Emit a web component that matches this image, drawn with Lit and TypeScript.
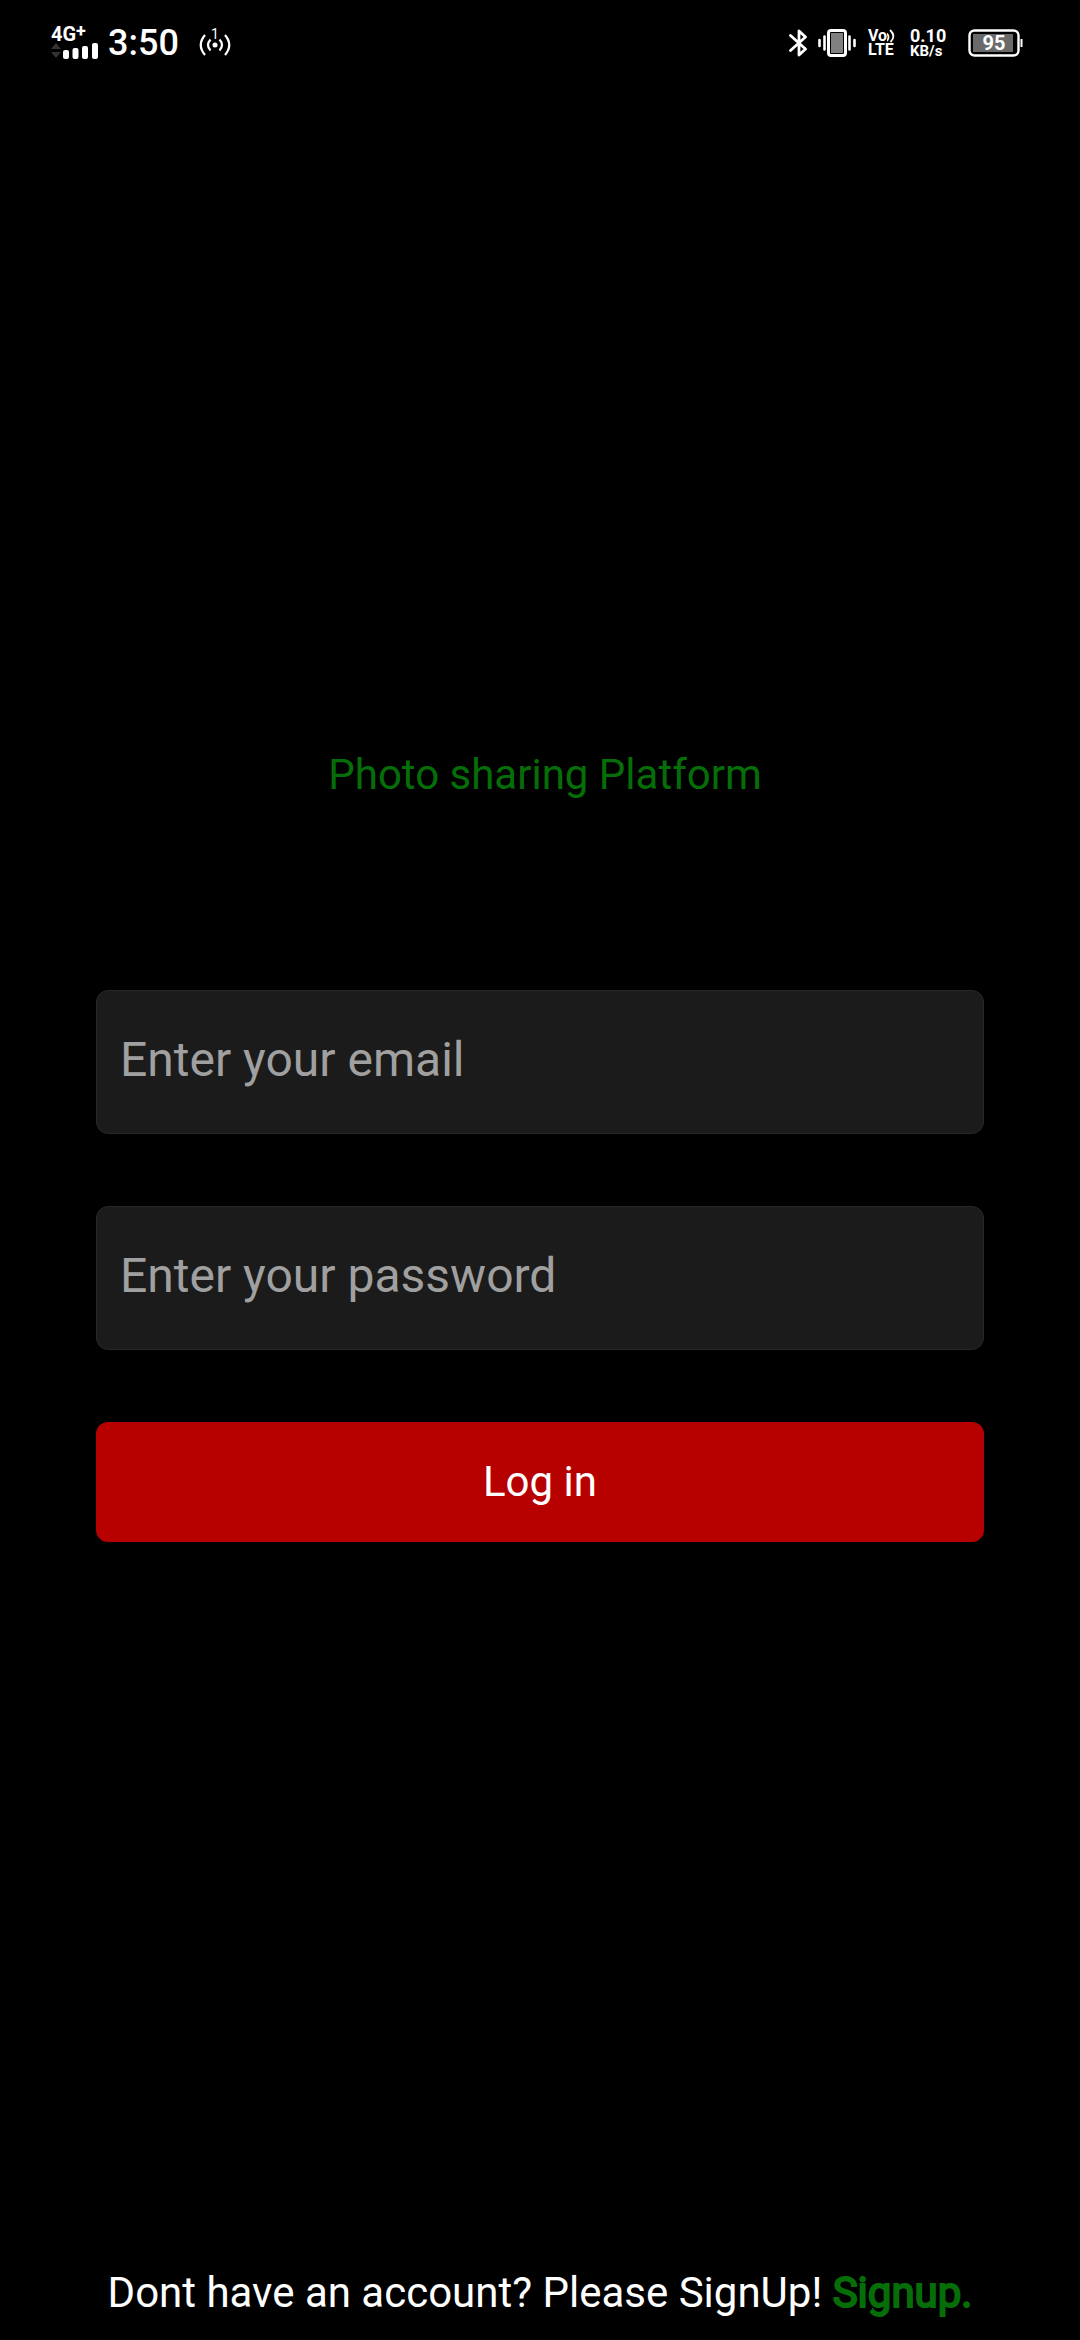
import { LitElement, html, css } from "lit";
import { customElement } from "lit/decorators.js";

@customElement("status-bar")
class StatusBar extends LitElement {
  static styles = css`
    :host {
      display: flex;
      justify-content: space-between;
      align-items: center;
      height: 86px;
      padding: 0 57px 0 51px;
      color: #fff;
      font-family: Roboto, sans-serif;
    }
    .group {
      display: flex;
      align-items: center;
    }
    .signal {
      display: flex;
      flex-direction: column;
      width: 48px;
    }
    .network {
      font-size: 20px;
      line-height: 15px;
      font-weight: 700;
      white-space: nowrap;
    }
    .plus {
      font-size: 18px;
      line-height: 8px;
      vertical-align: 4px;
    }
    .clock {
      margin-left: 9px;
      font-size: 36px;
      line-height: 42px;
      font-weight: 500;
    }
    .hotspot {
      margin-left: 20px;
    }
    .vibrate {
      margin-left: 10px;
    }
    .stack {
      display: flex;
      flex-direction: column;
      font-weight: 700;
    }
    .volte {
      margin-left: 12px;
      width: 28px;
      font-size: 16px;
      line-height: 14px;
    }
    .voice {
      display: flex;
    }
    .speed {
      margin-left: 14px;
      width: 38px;
      font-size: 18px;
      line-height: 16px;
    }
    .unit {
      font-size: 15px;
      line-height: 14px;
    }
    .battery {
      margin-left: 20px;
    }
    svg {
      display: block;
      flex: none;
    }
    text {
      font-family: Roboto, sans-serif;
      fill: #fff;
    }
  `;

  render() {
    return html`
      <div class="group">
        <div class="signal">
          <span class="network">4G<span class="plus">+</span></span>
          <svg width="48" height="17" viewBox="0 0 48 17" aria-hidden="true">
            <path d="M0 7L5 1L10 7ZM0 10H10L5 16Z" fill="#333" />
            <g fill="#fff">
              <rect x="12" y="8" width="6" height="9" rx="2" />
              <rect x="21.500" y="6" width="6" height="11" rx="2" />
              <rect x="31" y="4" width="6" height="13" rx="2" />
              <rect x="41" y="1" width="6" height="16" rx="2" />
            </g>
          </svg>
        </div>
        <span class="clock">3:50</span>
        <svg class="hotspot" width="32" height="36" viewBox="0 -3 32 36" aria-label="Hotspot">
          <circle cx="16" cy="17" r="2.500" fill="#fff" />
          <g fill="none" stroke="#fff" stroke-width="2.200">
            <path d="M11.500 11.500Q6.500 17 11.500 22.500M20.500 11.500Q25.500 17 20.500 22.500" />
            <path d="M6 7Q-2.500 17 6 27M26 7Q34.500 17 26 27" />
          </g>
          <text x="12" y="11" font-size="14">1</text>
        </svg>
      </div>
      <div class="group">
        <svg width="19" height="30" viewBox="0 0 19 30" aria-label="Bluetooth">
          <path
            d="M1.500 7.500L16.500 21L10 27V3L16.500 9L1.500 22.500"
            fill="none"
            stroke="#fff"
            stroke-width="2.800"
            stroke-linejoin="round"
            stroke-linecap="round"
          />
        </svg>
        <svg class="vibrate" width="38" height="30" viewBox="0 0 38 30" aria-label="Vibrate">
          <rect x="10.500" y="2.500" width="17" height="25" rx="2.500" fill="#000" stroke="#fff" stroke-width="3" />
          <rect x="13" y="5" width="12" height="20" fill="#808080" />
          <path
            d="M1.500 12V18M6.500 8.500V21.500M31.500 8.500V21.500M36.500 12V18"
            stroke="#fff"
            stroke-width="2.600"
            stroke-linecap="round"
          />
        </svg>
        <div class="stack volte">
          <span class="voice">
            Vo
            <svg width="8" height="14" viewBox="0 0 8 14" aria-hidden="true">
              <path d="M0 4.500Q3 8 0 12M3 1Q9.500 7 3.500 13" fill="none" stroke="#fff" stroke-width="1.800" />
            </svg>
          </span>
          <span>LTE</span>
        </div>
        <div class="stack speed">
          <span>0.10</span>
          <span class="unit">KB/s</span>
        </div>
        <svg class="battery" width="55" height="30" viewBox="0 0 55 30" aria-label="Battery 95 percent">
          <rect x="1.500" y="2.500" width="49" height="25" rx="5" fill="none" stroke="#fff" stroke-width="2.400" />
          <rect x="5" y="6" width="40" height="18" fill="#6a6a6a" />
          <path d="M53.500 11V19" stroke="#fff" stroke-width="2" />
          <text x="14.500" y="22" font-size="20" font-weight="700">95</text>
        </svg>
      </div>
    `;
  }
}

@customElement("app-root")
class AppRoot extends LitElement {
  static styles = css`
    :host {
      display: flex;
      flex-direction: column;
      min-height: 100vh;
      background: #000;
      color: #fff;
      font-family: Roboto, sans-serif;
      font-size: 42px;
      line-height: 50px;
    }
    .main {
      flex: 1;
      display: flex;
      flex-direction: column;
      justify-content: center;
      padding: 0 96px 62px;
    }
    .title {
      margin: 0 0 190px;
      padding-left: 10px;
      font-size: 42px;
      font-weight: 400;
      text-align: center;
      color: #066e08;
    }
    .form {
      display: flex;
      flex-direction: column;
      gap: 72px;
    }
    .field {
      box-sizing: border-box;
      width: 100%;
      height: 144px;
      padding: 0 23px 6px;
      border: 1px solid #282828;
      border-radius: 12px;
      outline: none;
      background: #1b1b1b;
      color: #fff;
      font: inherit;
      font-size: 48px;
    }
    .field::placeholder {
      color: #a0a0a0;
      opacity: 1;
    }
    .submit {
      height: 120px;
      padding: 0;
      border: none;
      border-radius: 12px;
      background: #b70000;
      color: #fff;
      font: inherit;
    }
    .footer {
      padding-bottom: 22px;
      text-align: center;
    }
    .link {
      color: #066e08;
      text-decoration: none;
      -webkit-text-stroke: 2px #066e08;
    }
  `;

  render() {
    return html`
      <status-bar></status-bar>
      <main class="main">
        <h1 class="title">Photo sharing Platform</h1>
        <form class="form" @submit=${(e: Event) => e.preventDefault()}>
          <input class="field" type="email" placeholder="Enter your email" aria-label="Enter your email" />
          <input class="field" type="password" placeholder="Enter your password" aria-label="Enter your password" />
          <button class="submit" type="submit">Log in</button>
        </form>
      </main>
      <footer class="footer">Dont have an account? Please SignUp! <a class="link" href="#signup">Signup.</a></footer>
    `;
  }
}
